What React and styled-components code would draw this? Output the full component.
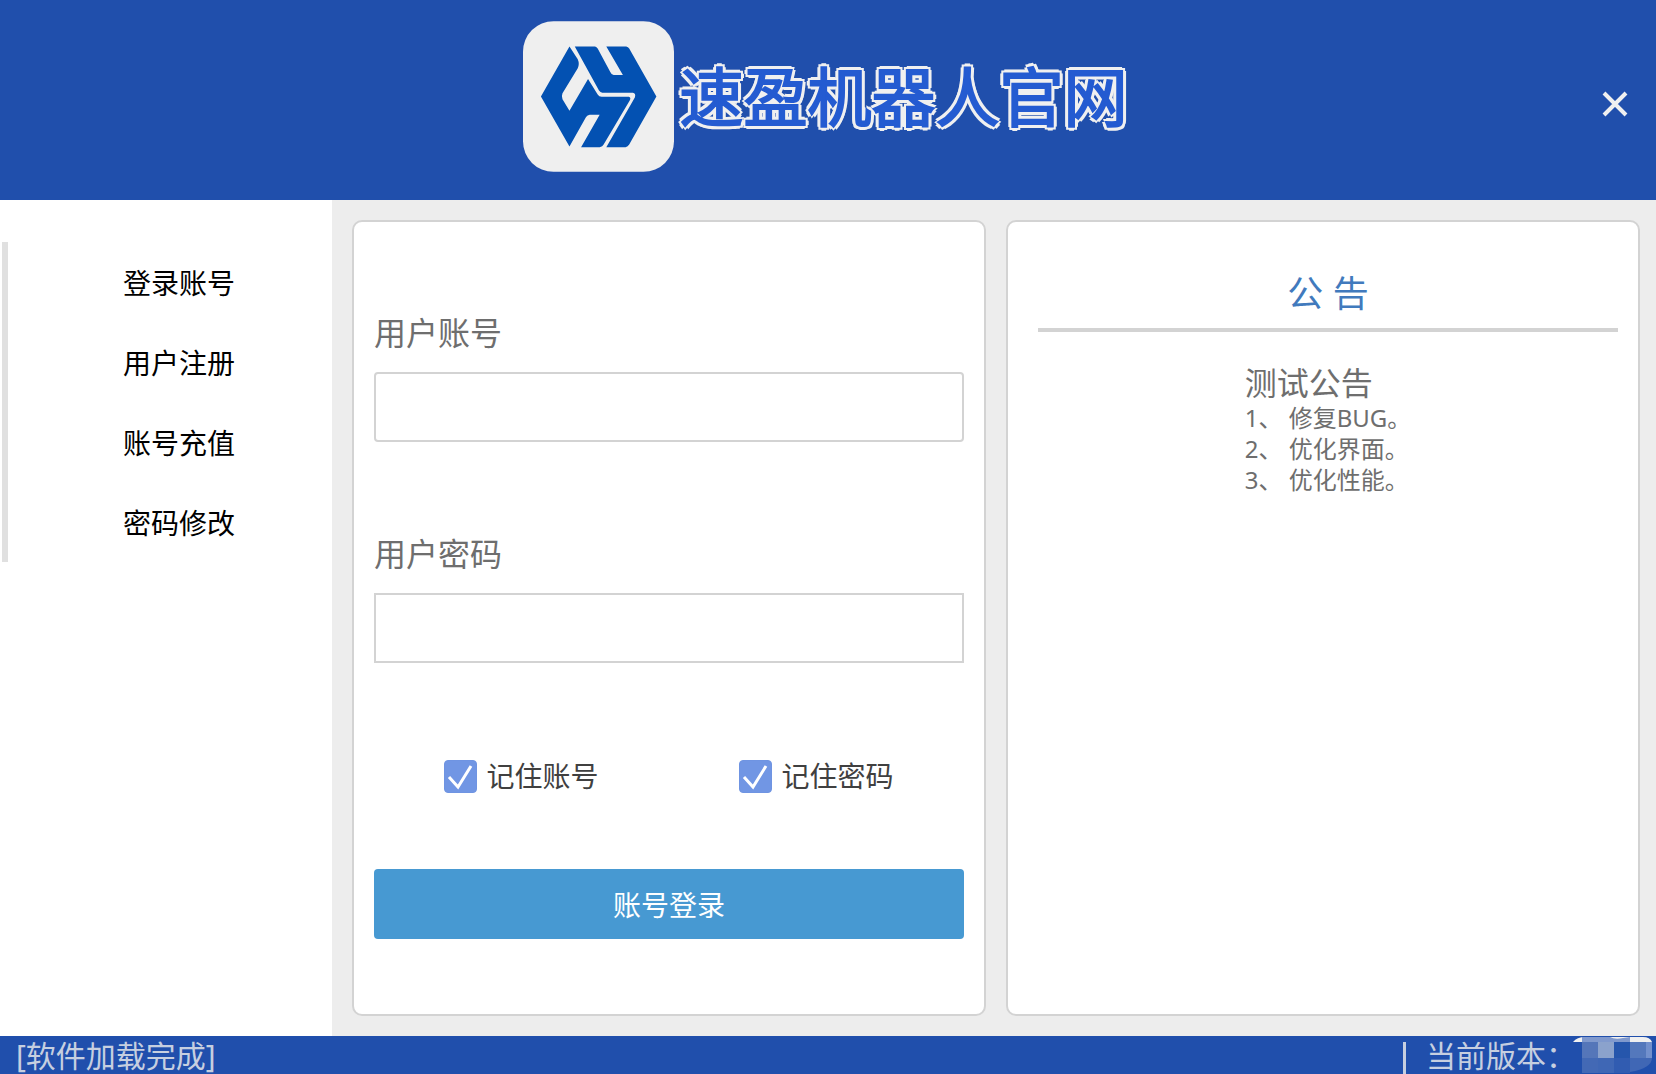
import React, { useState } from "react"
import styled, { createGlobalStyle } from "styled-components"

const GlobalStyle = createGlobalStyle`
  * {
    box-sizing: border-box;
  }
  body {
    margin: 0;
    font-family: "Noto Sans", "Noto Sans CJK SC", sans-serif;
    background: #ededed;
  }
  button, input {
    font-family: inherit;
  }
`

const menu = ["登录账号", "用户注册", "账号充值", "密码修改"]
const notices = ["修复BUG。", "优化界面。", "优化性能。"]

const Logo = () => (
  <LogoSvg viewBox="39 31 455 454" aria-hidden="true">
    <rect x="39" y="31" width="455" height="454" rx="92" fill="#efefef" />
    <g fill="#0351b2">
      <path d="M179 107L204 146Q210 160 204 173L158 248Q154 258 158 266L179 301L235 205L264 252Q268 259 276 259L358 259Q365 262 361 269L282 403Q279 410 270 411L214 411L270 313L240 313Q233 314 229 320L179 409L93 258Z" />
      <path d="M195 107L256 107Q261 108 264 113L302 184Q306 193 312 193L340 193L290 107L350 107Q356 108 359 113L441 258L359 403Q355 410 348 411L290 411L376 261Q380 249 370 247L278 247Q272 246 268 240Z" />
    </g>
  </LogoSvg>
)

const Remember = ({ id, label }) => {
  const [checked, setChecked] = useState(true)
  return (
    <Option htmlFor={id}>
      <CheckCell>
        <Check
          id={id}
          type="checkbox"
          checked={checked}
          onChange={e => setChecked(e.target.checked)}
        />
        {checked && (
          <Tick viewBox="0 0 33 33" aria-hidden="true">
            <path d="M5 17L14 27L27 6" />
          </Tick>
        )}
      </CheckCell>
      {label}
    </Option>
  )
}

// the version number is kept hidden behind a mosaic
const VersionMask = () => (
  <MaskSvg viewBox="0 0 80 37" aria-hidden="true">
    <path d="M0 6Q4 1 12 1L70 1Q77 1 79 6Z" fill="#f0f0f0" />
    <path d="M9 1H37Q42 4 50 2L57 1V6H9Z" fill="#8099cd" />
    <rect x="9" y="6" width="16" height="16" fill="#5576b9" />
    <rect x="25" y="6" width="16" height="16" fill="#8ba2cc" />
    <rect x="41" y="6" width="16" height="16" fill="#2656ac" />
    <rect x="57" y="6" width="16" height="16" fill="#5478bc" />
    <rect x="73" y="6" width="6" height="16" fill="#7290cd" />
    <rect x="9" y="22" width="16" height="15" fill="#4369b5" />
    <rect x="25" y="22" width="16" height="15" fill="#3f67b5" />
    <rect x="41" y="22" width="16" height="15" fill="#315cb1" />
    <path d="M57 22H79Q79 32 57 36Z" fill="#4067b5" />
  </MaskSvg>
)

const App = () => (
  <Wrapper>
    <GlobalStyle />
    <Header>
      <Brand>
        <Logo />
        <Title>速盈机器人官网</Title>
      </Brand>
      <Close type="button" aria-label="关闭">
        <svg width="26" height="26" viewBox="0 0 26 26">
          <path d="M2 2L24 24M24 2L2 24" stroke="#f0f0f0" strokeWidth="4" />
        </svg>
      </Close>
    </Header>
    <Body>
      <Sidebar>
        <Menu>
          {menu.map(item => (
            <MenuItem type="button" key={item}>
              {item}
            </MenuItem>
          ))}
        </Menu>
      </Sidebar>
      <Main>
        <FormCard onSubmit={e => e.preventDefault()}>
          <Field>
            <Label htmlFor="account">用户账号</Label>
            <Input id="account" type="text" $radius="4px" />
          </Field>
          <Field>
            <Label htmlFor="password">用户密码</Label>
            <Input id="password" type="password" $radius="0" />
          </Field>
          <Options>
            <Remember id="rememberAccount" label="记住账号" />
            <Remember id="rememberPassword" label="记住密码" />
          </Options>
          <Submit type="submit">账号登录</Submit>
        </FormCard>
        <NoticeCard>
          <NoticeHeader>公 告</NoticeHeader>
          <Notice>
            <NoticeTitle>测试公告</NoticeTitle>
            {notices.map((text, i) => (
              <NoticeLine key={text}>
                {i + 1}、 {text}
              </NoticeLine>
            ))}
          </Notice>
        </NoticeCard>
      </Main>
    </Body>
    <Footer>
      <span>[软件加载完成]</span>
      <Version>
        <Separator />
        <VersionLabel>当前版本：</VersionLabel>
        <VersionMask />
      </Version>
    </Footer>
  </Wrapper>
)

const Wrapper = styled.div`
  display: flex;
  flex-direction: column;
  min-height: 100vh;
`

const Header = styled.header`
  display: grid;
  grid-template-columns: 1fr auto 1fr;
  align-items: center;
  height: 200px;
  padding: 0 24px;
  background: #204fac;
`

const Brand = styled.div`
  grid-column: 2;
  display: flex;
  align-items: center;
  gap: 6px;
  padding: 0 6px 8px 0;
`

const LogoSvg = styled.svg`
  display: block;
  width: 151px;
  height: 151px;
`

const Title = styled.h1`
  margin: 0;
  padding-top: 2px;
  color: #245bd1;
  font-size: 64px;
  line-height: 80px;
  font-weight: 400;
  white-space: nowrap;
  -webkit-text-stroke: 2px #245bd1;
  text-shadow: 4px 0 #f0f0f0, -4px 0 #f0f0f0, 0 4px #f0f0f0, 0 -4px #f0f0f0,
    3px 3px #f0f0f0, -3px 3px #f0f0f0, 3px -3px #f0f0f0, -3px -3px #f0f0f0;
`

const Close = styled.button`
  justify-self: end;
  display: flex;
  margin-top: 8px;
  padding: 4px;
  border: 0;
  background: none;
  cursor: pointer;
`

const Body = styled.div`
  flex: 1;
  display: flex;
`

const Sidebar = styled.aside`
  width: 332px;
  padding: 42px 0 0 2px;
  background: #fff;
`

const Menu = styled.nav`
  display: flex;
  flex-direction: column;
  padding-left: 18px;
  border-left: 6px solid #e0e0e0;
`

const MenuItem = styled.button`
  height: 80px;
  padding: 0;
  border: 0;
  background: none;
  color: #000;
  font-size: 28px;
  cursor: pointer;
`

const Main = styled.main`
  flex: 1;
  display: grid;
  grid-template-columns: 1fr 1fr;
  gap: 20px;
  padding: 20px 16px 20px 20px;
`

const FormCard = styled.form`
  display: flex;
  flex-direction: column;
  padding: 87px 20px 20px;
  border: 2px solid #d3d3d3;
  border-radius: 10px;
  background: #fff;
`

const Field = styled.div`
  display: flex;
  flex-direction: column;
  gap: 15px;
  margin-bottom: 88px;
`

const Label = styled.label`
  color: #6e6e6e;
  font-size: 32px;
  line-height: 48px;
`

const Input = styled.input`
  width: 100%;
  height: 70px;
  padding: 0 16px;
  border: 2px solid #d3d3d3;
  border-radius: ${props => props.$radius};
  outline: none;
  background: #fff;
  color: #404040;
  font-size: 28px;
`

const Options = styled.div`
  display: grid;
  grid-template-columns: 1fr 1fr;
  justify-items: center;
  margin: 5px 0 73px;
`

const Option = styled.label`
  display: flex;
  align-items: center;
  gap: 9px;
  color: #404040;
  font-size: 28px;
  line-height: 40px;
  cursor: pointer;
`

const CheckCell = styled.span`
  display: grid;

  > * {
    grid-area: 1 / 1;
  }
`

const Check = styled.input`
  appearance: none;
  width: 33px;
  height: 33px;
  margin: 0;
  border: 1px solid #6f94e2;
  border-radius: 4px;
  background: #fff;

  &:checked {
    background: #7196e4;
  }
`

const Tick = styled.svg`
  width: 33px;
  height: 33px;
  pointer-events: none;
  fill: none;
  stroke: #fff;
  stroke-width: 3;
`

const Submit = styled.button`
  height: 70px;
  border: 0;
  border-radius: 4px;
  background: #4799d2;
  color: #fff;
  font-size: 28px;
  cursor: pointer;
`

const NoticeCard = styled.section`
  padding: 46px 20px 20px 30px;
  border: 2px solid #d3d3d3;
  border-radius: 10px;
  background: #fff;
`

const NoticeHeader = styled.h2`
  margin: 0;
  padding-bottom: 8px;
  border-bottom: 4px solid #d3d3d3;
  color: #417abd;
  font-size: 36px;
  line-height: 52px;
  font-weight: 400;
  text-align: center;
`

const Notice = styled.div`
  width: fit-content;
  margin: 32px auto 0;
  color: #6e6e6e;
`

const NoticeTitle = styled.h3`
  margin: 0;
  font-size: 32px;
  line-height: 38px;
  font-weight: 400;
`

const NoticeLine = styled.p`
  margin: 0;
  font-size: 24px;
  line-height: 31px;
`

const Footer = styled.footer`
  display: flex;
  justify-content: space-between;
  height: 38px;
  padding: 0 3px 0 16px;
  background: #204fac;
  color: #c6cfe0;
  font-size: 30px;
  line-height: 40px;
`

const Version = styled.div`
  display: flex;
`

const VersionLabel = styled.span`
  margin-right: -3px;
`

const Separator = styled.i`
  width: 3px;
  margin: 6px 20px 0 0;
  background: #c6cfe0;
`

const MaskSvg = styled.svg`
  width: 80px;
  height: 37px;
`

export default App
